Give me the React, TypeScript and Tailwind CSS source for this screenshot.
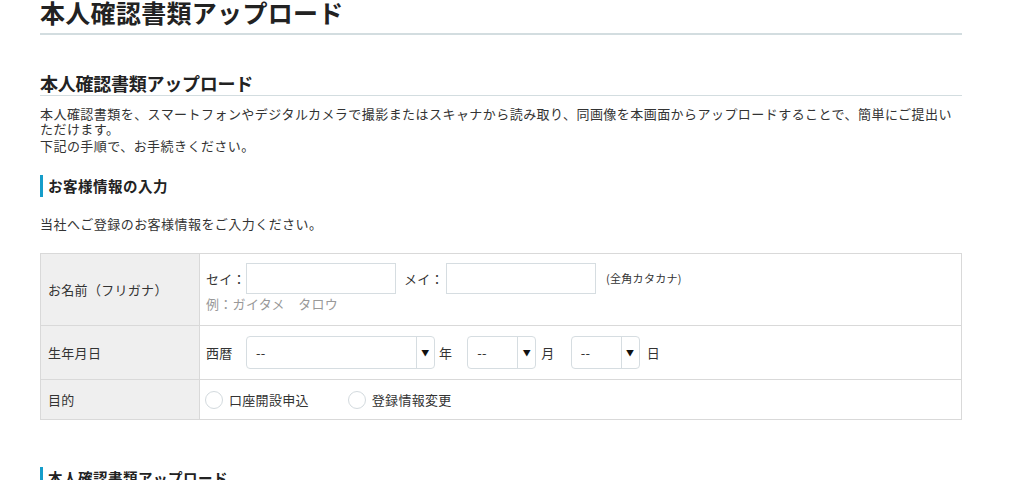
const font = "font-['Noto_Sans_CJK_JP','Noto_Sans',sans-serif]";

function SectionTitle({ children }: { children: React.ReactNode }) {
  return (
    <h3 className="flex h-[22px] items-center border-l-[3px] border-[#159dca] pl-[5px] text-[14.5px] leading-[22px] font-bold tracking-[0.5px] text-[#222]">
      {children}
    </h3>
  );
}

function Select({ width, value }: { width: string; value: string }) {
  return (
    <div className={`${width} flex h-[33px] items-stretch rounded-[4px] border border-[#d6dde1] bg-white`}>
      <span className="flex flex-1 items-center pl-[9px] text-[13px] text-[#333]">{value}</span>
      <span className="flex w-[18px] items-center justify-center border-l border-[#d6dde1] text-[8px] text-[#111]">
        ▼
      </span>
    </div>
  );
}

function Radio({ label }: { label: string }) {
  return (
    <label className="flex items-center">
      <span className="h-[18px] w-[18px] rounded-full border border-[#d3dade] bg-white" />
      <span className="ml-[6px]">{label}</span>
    </label>
  );
}

export default function App() {
  return (
    <div className={`${font} min-h-[480px] w-[1024px] overflow-hidden bg-white text-[#333]`}>
      <div className="ml-[40px] w-[922px]">
        <h1 className="-mt-px border-b-2 border-[#d3dde0] pb-[8px] text-[25px] leading-[26px] font-bold tracking-[0.3px] text-[#222]">
          本人確認書類アップロード
        </h1>

        <h2 className="mt-[37px] border-b border-[#d3dde0] pb-px text-[18px] leading-[22px] font-bold tracking-[-0.25px] text-[#222]">
          本人確認書類アップロード
        </h2>

        <p className="mt-[10px] text-[13px] leading-[15px] tracking-[0.45px]">
          本人確認書類を、スマートフォンやデジタルカメラで撮影またはスキャナから読み取り、同画像を本画面からアップロードすることで、簡単にご提出いただけます。
          <br />
          <span className="mt-[2px] inline-block">下記の手順で、お手続きください。</span>
        </p>

        <div className="mt-[22px]">
          <SectionTitle>お客様情報の入力</SectionTitle>
        </div>

        <p className="mt-[19px] text-[13px] leading-[15px] tracking-[0.45px]">
          当社へご登録のお客様情報をご入力ください。
        </p>

        <div className="mt-[22px] border border-[#d9d9d9] text-[13px] tracking-[0.3px]">
          <div className="flex h-[71px]">
            <div className="flex w-[159px] items-center border-r border-[#d9d9d9] bg-[#efefef] pl-[7px]">
              お名前（フリガナ）
            </div>
            <div className="flex flex-1 flex-col pt-[9px] pl-[6px]">
              <div className="flex items-center">
                <span className="w-[40px]">セイ：</span>
                <input className="h-[31px] w-[150px] border border-[#d6dde1] bg-white outline-none" />
                <span className="ml-[8px] w-[42px]">メイ：</span>
                <input className="h-[31px] w-[150px] border border-[#d6dde1] bg-white outline-none" />
                <span className="ml-[10px] text-[11px]">(全角カタカナ)</span>
              </div>
              <span className="mt-[2px] leading-[15px] text-[#999]">例：ガイタメ　タロウ</span>
            </div>
          </div>

          <div className="flex h-[54px] border-t border-[#d9d9d9]">
            <div className="flex w-[159px] items-center border-r border-[#d9d9d9] bg-[#efefef] pl-[7px]">
              生年月日
            </div>
            <div className="flex flex-1 items-center pl-[6px]">
              <span className="w-[40px]">西暦</span>
              <Select width="w-[189px]" value="--" />
              <span className="ml-[4px]">年</span>
              <div className="ml-[15px]">
                <Select width="w-[69px]" value="--" />
              </div>
              <span className="ml-[5px]">月</span>
              <div className="ml-[16px]">
                <Select width="w-[69px]" value="--" />
              </div>
              <span className="ml-[7px]">日</span>
            </div>
          </div>

          <div className="flex h-[40px] border-t border-[#d9d9d9]">
            <div className="flex w-[159px] items-center border-r border-[#d9d9d9] bg-[#efefef] pl-[7px]">
              目的
            </div>
            <div className="flex flex-1 items-center gap-[39px] pl-[5px]">
              <Radio label="口座開設申込" />
              <Radio label="登録情報変更" />
            </div>
          </div>
        </div>

        <div className="mt-[47px]">
          <SectionTitle>本人確認書類アップロード</SectionTitle>
        </div>
      </div>
    </div>
  );
}
